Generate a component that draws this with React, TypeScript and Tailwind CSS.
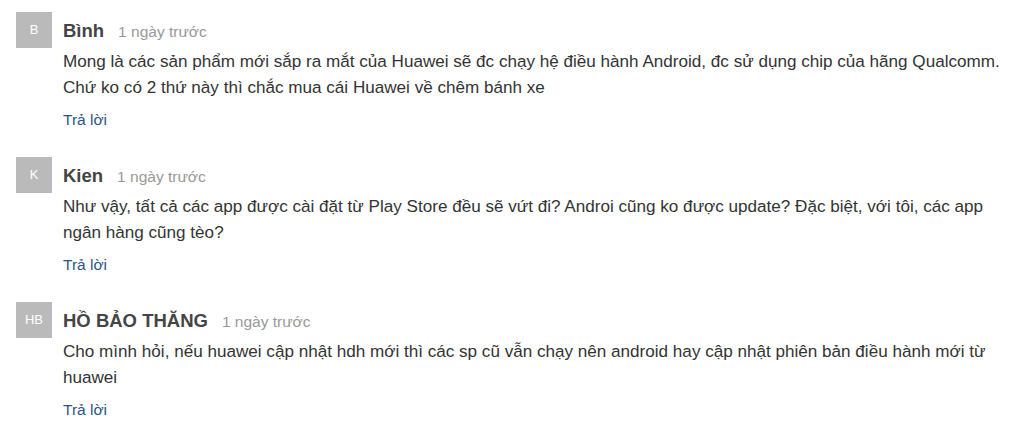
import React from "react";

const comments = [
  {
    initials: "B",
    name: "Bình",
    time: "1 ngày trước",
    text: "Mong là các sản phẩm mới sắp ra mắt của Huawei sẽ đc chạy hệ điều hành Android, đc sử dụng chip của hãng Qualcomm. Chứ ko có 2 thứ này thì chắc mua cái Huawei về chêm bánh xe",
  },
  {
    initials: "K",
    name: "Kien",
    time: "1 ngày trước",
    text: "Như vậy, tất cả các app được cài đặt từ Play Store đều sẽ vứt đi? Androi cũng ko được update? Đặc biệt, với tôi, các app ngân hàng cũng tèo?",
  },
  {
    initials: "HB",
    name: "HỒ BẢO THĂNG",
    time: "1 ngày trước",
    text: "Cho mình hỏi, nếu huawei cập nhật hdh mới thì các sp cũ vẫn chạy nên android hay cập nhật phiên bản điều hành mới từ huawei",
  },
];

export default function App() {
  return (
    <div
      className="w-[1024px] h-[443px] bg-white overflow-hidden pl-4 pt-3"
      style={{ fontFamily: '"Liberation Sans", Arial, sans-serif' }}
    >
      <div className="flex flex-col gap-[27px]">
        {comments.map((c) => (
          <div key={c.name} className="flex gap-[11px]">
            <div className="w-9 h-9 shrink-0 bg-[#bababa] text-white text-[13px] flex items-center justify-center">
              {c.initials}
            </div>
            <div className="w-[948px]">
              <div className="flex items-baseline gap-[14px] h-[37px] pt-[5px]">
                <span className="text-[18.5px] font-bold text-[#444]">{c.name}</span>
                <span className="text-[15.5px] text-[#999]">{c.time}</span>
              </div>
              <p className="text-[17.1px] leading-[26px] text-[#333]">{c.text}</p>
              <div className="mt-[9px] text-[15.5px] leading-[20px] text-[#2d5584]">Trả lời</div>
            </div>
          </div>
        ))}
      </div>
    </div>
  );
}
